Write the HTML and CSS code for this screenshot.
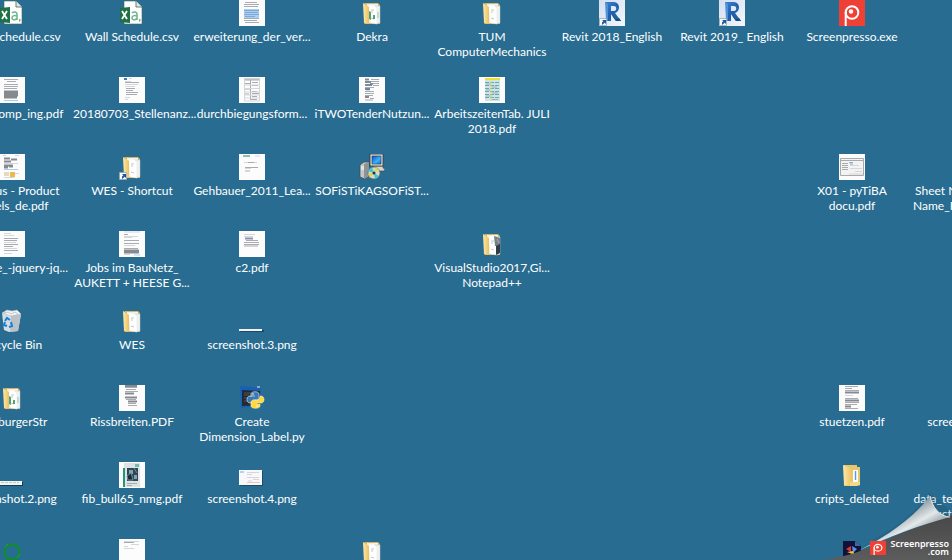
FILE: index.html
```html
<!DOCTYPE html>
<html lang="de">
<head>
<meta charset="utf-8">
<title>Desktop</title>
<link rel="stylesheet" href="styles.css">
</head>
<body>
<svg class="defs" aria-hidden="true">
  <defs>
    <linearGradient id="gFold" x1="0" y1="0" x2="1" y2="0"><stop offset="0" stop-color="#ffe9a6"/><stop offset="1" stop-color="#e9c163"/></linearGradient>
    <linearGradient id="gRevit" x1="0" y1="0" x2="1" y2="1"><stop offset="0" stop-color="#d3def0"/><stop offset="1" stop-color="#f3f7fc"/></linearGradient>
    <linearGradient id="gR" x1="0" y1="0" x2="1" y2="1"><stop offset="0" stop-color="#3c86d6"/><stop offset=".5" stop-color="#1f5fb0"/><stop offset="1" stop-color="#1a6f9a"/></linearGradient>
    <linearGradient id="gCurl" gradientUnits="userSpaceOnUse" x1="88" y1="18" x2="104" y2="46"><stop offset=".1" stop-color="#7d8f98"/><stop offset=".4" stop-color="#b8c1c5"/><stop offset=".65" stop-color="#e4e8ea"/><stop offset="1" stop-color="#98a3a8"/></linearGradient>
    <linearGradient id="gDark" x1="0" y1="0" x2="0" y2="1"><stop offset="0" stop-color="#484848"/><stop offset="1" stop-color="#5c5c5c"/></linearGradient>
    <linearGradient id="gScreen" x1="0" y1="0" x2="1" y2="1"><stop offset="0" stop-color="#1747c9"/><stop offset=".6" stop-color="#39b6f3"/><stop offset="1" stop-color="#1c5fd6"/></linearGradient>
  </defs>
  <symbol id="csv" viewBox="0 0 26 26">
    <path d="M5 1h12l6 6v17H5z" fill="#fff" stroke="#3f6b5a" stroke-opacity=".6"/>
    <path d="M17 1v6h6" fill="#dfe9e4" stroke="#49665b" stroke-width=".8"/>
    <path d="M13 13c2-2 5-1 5 1v6M18 16c-3-1-5 0-5 2s3 3 5 0" fill="none" stroke="#6cb58d" stroke-width="1.5"/>
    <path d="M20 19h1.500v2l-1.500 1z" fill="#6cb58d"/>
    <path d="M1 8l10-1v16L1 22z" fill="#1d7145"/>
    <path d="M3 11l5 8M8 11l-5 8" stroke="#fff" stroke-width="1.800"/>
  </symbol>
  <symbol id="folder" viewBox="0 0 26 26">
    <path d="M5 4l1-1h13l2 2v19H6l-1-1z" fill="#d9b55d"/>
    <path d="M8 4h11v19H8z" fill="#f4f4f2"/>
    <path d="M16 6h5v17l-4 1z" fill="#f1f3f3" stroke="#b9c0c0" stroke-width=".5"/>
    <path d="M9 5h6l3 3v16l-7-1z" fill="#fff" stroke="#d5d8d6" stroke-width=".4"/>
    <path d="M4 3l6 4v17l-5-1z" fill="url(#gFold)"/>
    <path d="M12 10h3M12 12h2M12 18l3 1" stroke="#abb" stroke-width=".8"/>
  </symbol>
  <symbol id="folderGreen" viewBox="0 0 26 26">
    <use href="#folder"/>
    <path d="M10 11l2 1v8l-2-1zM14 15h2v4h-2z" fill="#2e8b57" opacity=".8"/><path d="M19 12v6" stroke="#9cc6ae" stroke-width="1"/>
  </symbol>
  <symbol id="shortcut" viewBox="0 0 26 26">
    <path d="M.5 18.500h7v7h-7z" fill="#f7f9fb" stroke="#9aa7b5" stroke-width=".8"/>
    <path d="M3 20h4v4l-1.300-1.200L3 25v-2.500l1.300-1.200z" fill="#1c57a5"/>
  </symbol>
  <symbol id="revit" viewBox="0 0 26 26">
    <path d="M0 0h26v26H0z" fill="url(#gRevit)"/>
    <path fill-rule="evenodd" d="M6 2h9c6 0 7 9 1 11l6 8h-5l-5-7v7H7V5zM12 6v5h3c3 0 3-5 0-5z" fill="url(#gR)"/>
    <path d="M6 2l3 2v17l-2-1z" fill="#4f92d6"/><path d="M12 14l5 7h5l-2-3-3 1z" fill="#174c84"/>
    <use href="#shortcut" width="26" height="26"/>
  </symbol>
  <symbol id="presso" viewBox="0 0 26 26">
    <path d="M0 0h26v26H0z" fill="#ee4035"/>
    <circle cx="13" cy="12.500" r="6.300" fill="none" stroke="#fff" stroke-width="2"/>
    <path d="M6.700 12v14" stroke="#fff" stroke-width="2"/><circle cx="12" cy="11.500" r="2.200" fill="#fff"/>
  </symbol>
</svg>

<main class="desktop">
  <!-- column 1 -->
  <a class="item c1 r1" href="#"><svg class="icon" viewBox="0 0 26 26"><use href="#csv"/></svg><span>Door Schedule.csv</span></a>
  <a class="item c1 r2" href="#"><svg class="icon paper" viewBox="0 0 26 26"><path class="mid" d="M5 2.500h14M8 4.500h9M5 7.500h14M5 9.500h14M5 11.500h13"/><path class="bold" d="M5 14.500h14M5 16.500h14M5 18.500h14M5 20.500h13"/><path class="blue" d="M5 23.500h14"/></svg><span>bvb2_komp_ing.pdf</span></a>
  <a class="item c1 r3" href="#"><svg class="icon paper" viewBox="0 0 26 26"><path class="light" d="M4 1.500h3M5 9.500h14M16 1.500h4"/><path class="bold" d="M5 4.500h6M12 5.500h6M5 7.500h7M5 11.500h9M5 13.500h4M10 12.500h4"/><path class="blue" d="M5 15.500h14"/><path d="M5 18h5v4H5z" fill="#e8d9b9"/><path d="M11 18h5v5h-5z" fill="#efb84d"/><path class="light" d="M16 19.500h4M5 23.500h10"/></svg><span>Asterius - Product Panels_de.pdf</span></a>
  <a class="item c1 r4" href="#"><svg class="icon paper" viewBox="0 0 26 26"><path class="light" d="M5 2.500h7M5 4.500h10M5 11.500h12M5 17.500h13M5 22.500h8"/><path class="mid" d="M5 7.500h14M5 9.500h13M5 13.500h14M5 15.500h9M5 19.500h14"/></svg><span>beispiele_-jquery-jq...</span></a>
  <a class="item c1 r5" href="#"><svg class="icon" viewBox="0 0 26 26"><path d="M3 5l19 1-3 17-9 1-5-2z" fill="#d8dde1"/><path d="M12 7l10-1-3 17-8 1z" fill="#bac2c8"/><path d="M3 5l5-3 5 1 5-1 4 4-10 2z" fill="#f5f7f8" stroke="#a7b4bb" stroke-width=".6"/><path d="M5 5l4-1 3 2 4-2 3 2" fill="none" stroke="#aab8bf" stroke-width=".8"/><path d="M6 13l2-3 3 2M12 14l1 4-3 1M8 18l-3-1 1-3" fill="none" stroke="#1481d7" stroke-width="2"/></svg><span>Recycle Bin</span></a>
  <a class="item c1 r6" href="#"><svg class="icon" viewBox="0 0 26 26"><use href="#folderGreen"/></svg><span>IsenburgerStr</span></a>
  <a class="item c1 r7" href="#"><svg class="icon" viewBox="0 0 26 26"><path d="M0 20h24v4H0z" fill="#173f58"/><path d="M0 19h23v4H0z" fill="#f2f4ef"/><path d="M2 20.500h18" stroke="#c0ccbd" stroke-dasharray="3 1"/></svg><span>screenshot.2.png</span></a>
  <a class="item c1 r8" href="#" aria-label="Ring"><svg class="icon" viewBox="0 0 26 26"><circle cx="13" cy="13" r="7.500" fill="none" stroke="#128a35" stroke-width="2.500"/><path d="M6 8l3-3M18 19l3-4" stroke="#19a047" stroke-width="1"/></svg></a>

  <!-- column 2 -->
  <a class="item c2 r1" href="#"><svg class="icon" viewBox="0 0 26 26"><use href="#csv"/></svg><span>Wall Schedule.csv</span></a>
  <a class="item c2 r2" href="#"><svg class="icon paper" viewBox="0 0 26 26"><path d="M5 1h3v2H5z" fill="#3a7cc0"/><path class="light" d="M10 1.500h3M6 4.500h6M6 7.500h13M6 9.500h10M6 20.500h5M6 22.500h3"/><path class="mid" d="M6 5.500h14M7 11.500h9M7 13.500h7M7 15.500h12M7 17.500h11"/></svg><span>20180703_Stellenanz...</span></a>
  <a class="item c2 r3" href="#"><svg class="icon" viewBox="0 0 26 26"><use href="#folder"/><use href="#shortcut"/></svg><span>WES - Shortcut</span></a>
  <a class="item c2 r4" href="#"><svg class="icon paper" viewBox="0 0 26 26"><path class="light" d="M5 1h16M5 5.500h14M5 6.500h8M5 14.500h11M5 23.500h6"/><path class="mid" d="M5 3.500h4M5 9.500h15M5 12.500h15M5 17.500h14"/><path class="bold" d="M5 19.500h15M5 21.500h15"/><path class="blue" d="M15 24h6"/></svg><span>Jobs im BauNetz_ AUKETT + HEESE G...</span></a>
  <a class="item c2 r5" href="#"><svg class="icon" viewBox="0 0 26 26"><use href="#folder"/></svg><span>WES</span></a>
  <a class="item c2 r6" href="#"><svg class="icon paper" viewBox="0 0 26 26"><path class="mid" d="M6 2.500h12M7 4.500h10M6 6.500h13M7 14.500h10M9 18.500h8M9 20.500h9"/><path class="bold" d="M6 1h12M6 8.500h9M6 12.500h12M9 16.500h9"/></svg><span>Rissbreiten.PDF</span></a>
  <a class="item c2 r7" href="#"><svg class="icon paper" viewBox="0 0 26 26"><path d="M5 1h16v24H5z" fill="#dce4e3"/><path d="M4 6h2v19H4z" fill="#24947d"/><path d="M8 6h11v13H8z" fill="#314653"/><path d="M10 8h4v4h-4zM15 13h3v4h-3z" fill="#7aa5b8"/><path d="M8 14l4-3 2 7H9zM15 6l3 5" fill="#182932" stroke="#6f8c95"/><path d="M16 2h4v3h-4z" fill="#77bbb0"/><path class="mid" d="M8 21.500h10M8 23.500h5"/></svg><span>fib_bull65_nmg.pdf</span></a>
  <a class="item c2 r8" href="#" aria-label="PDF"><svg class="icon paper" viewBox="0 0 26 26"><path class="mid" d="M5 3.500h10"/><path class="light" d="M5 2.500h15M5 7.500h4M5 9.500h10M12 5.500h8"/></svg></a>

  <!-- column 3 -->
  <a class="item c3 r1" href="#"><svg class="icon paper" viewBox="0 0 26 26"><path d="M5 9h15v9H5z" fill="#a9cff2"/><path class="mid" d="M6 2.500h12M5 4.500h15M5 6.500h14M5 18.500h15M5 20.500h13M6 22.500h14"/><path d="M5 10.500h15M6 12.500h13M5 14.500h15M6 16.500h10" stroke="#7fa9d4"/></svg><span>erweiterung_der_ver...</span></a>
  <a class="item c3 r2" href="#"><svg class="icon paper" viewBox="0 0 26 26"><path class="mid" d="M6 2h14M6 3h14M6 6.500h5M6 12h6"/><path class="mid" d="M13 5.500h6M13 8.500h6M13 14.500h5M13 16.500h7M13 19.500h5M12 22.500h6M11.500 3v20M6 17h4"/><path class="light" d="M5.500 1v23h15V1M6 8h14M6 11.500h14M6 15h14M6 18h14M6 21h14"/></svg><span>durchbiegungsform...</span></a>
  <a class="item c3 r3" href="#"><svg class="icon paper" viewBox="0 0 26 26"><path d="M4 1h7v2H4z" fill="#88c6a8"/><path class="light" d="M16 2h5M6 16.500h5M5 8.500h13M6 14.500h6M6 17.500h5"/><path class="mid" d="M6 13.500h13M9 8.500h6"/></svg><span>Gehbauer_2011_Lea...</span></a>
  <a class="item c3 r4" href="#"><svg class="icon paper" viewBox="0 0 26 26"><path class="light" d="M5 3.500h11M5 5.500h9"/><path d="M6 7.500h8" stroke="#8995ae" stroke-width="2"/><path class="mid" d="M7 9.500h12M5 11.500h15M5 13.500h15M5 15h14"/></svg><span>c2.pdf</span></a>
  <a class="item c3 r5" href="#"><svg class="icon" viewBox="0 0 26 26"><path d="M1 22h24v2H1z" fill="#174a68"/><path d="M0 21h23v2H0z" fill="#f3f3f3"/></svg><span>screenshot.3.png</span></a>
  <a class="item c3 r6" href="#"><svg class="icon" viewBox="0 0 26 26"><path d="M1 1l21 2v18L2 23z" fill="#1760b8"/><path d="M3 5l18 1v14L3 21z" fill="#232a31"/><path d="M5 8h7M5 10h5M5 13h8M5 16h4" stroke="#4c5553"/><path d="M18 2h3" stroke="#eee"/><path d="M12 12V9c0-3 8-3 8 0v4c0 2-2 2-4 2-3 0-3 1-3 3h-2c-4 0-4-7 0-7h5" fill="#3679b5" stroke="#d8e4e8" stroke-width=".7"/><path d="M21 11h1c4 0 4 7 0 7h-4v1h3v2c0 3-9 3-9 0v-3c0-3 2-3 5-3 3 0 4-1 4-4z" fill="#ffd83e" stroke="#fff3bd" stroke-width=".6"/><circle cx="14" cy="9" r=".8" fill="#fff"/><circle cx="18" cy="21" r=".8" fill="#fff"/></svg><span>Create Dimension_Label.py</span></a>
  <a class="item c3 r7" href="#"><svg class="icon" viewBox="0 0 26 26"><path d="M1 9h23v15H1z" fill="#1c4d68"/><path d="M0 8h23v15H0z" fill="#f8f8fa"/><path d="M1 9h4v2H1z" fill="#b7d3ec"/><path class="light" d="M8 10.500h12M8 12.500h5M8 15.500h12M14 17.500h6M9 19h4"/><path d="M8 20.500h13" stroke="#f1c3c3"/></svg><span>screenshot.4.png</span></a>

  <!-- column 4 -->
  <a class="item c4 r1" href="#"><svg class="icon" viewBox="0 0 26 26"><use href="#folderGreen"/></svg><span>Dekra</span></a>
  <a class="item c4 r2" href="#"><svg class="icon paper" viewBox="0 0 26 26"><path class="bold" d="M6 2.500h4M6 5h6M6 8h7M6 12h5M6 20h4"/><path class="mid" d="M12 2.500h8M12 4.500h8M13 6.500h7M14 8.500h6M6 10.500h9M6 14.500h9M6 16.500h9M6 18.500h8M11 21.500h4M6 23h8"/><path d="M11 7h3M7 12.500h4" stroke="#557fbd" stroke-width="1.500"/></svg><span>iTWOTenderNutzun...</span></a>
  <a class="item c4 r3" href="#"><svg class="icon" viewBox="0 0 26 26"><path d="M1 11l4-3h5v14l-4 3-5-2z" fill="#c5c8c8" stroke="#3b484e" stroke-width=".7"/><path d="M5 10l5-2v14l-5 3z" fill="#8c9496"/><path d="M2 13h3M2 15h3" stroke="#fff"/><path d="M15 12h9v2l2 1-1 2H12z" fill="#d7d6ca" stroke="#454942" stroke-width=".6"/><path d="M11 0h13v12H11z" fill="#dedbc9" stroke="#303a42" stroke-width=".8"/><path d="M13 2h9v8h-9z" fill="url(#gScreen)" stroke="#173a75" stroke-width=".6"/><circle cx="15" cy="19" r="6" fill="#d6d9d2" stroke="#626963" stroke-width=".7"/><path d="M15 19L9 17l4-4zM15 19l5 3-4 3z" fill="#3fc6d3"/><path d="M15 19l5-3-3-3zM15 19l-4 5-2-4z" fill="#e2d44a"/><circle cx="15" cy="19" r="1.500" fill="#27353a"/></svg><span>SOFiSTiKAGSOFiST...</span></a>
  <a class="item c4 r8" href="#" aria-label="Folder"><svg class="icon" viewBox="0 0 26 26"><use href="#folder"/></svg></a>

  <!-- column 5 -->
  <a class="item c5 r1" href="#"><svg class="icon" viewBox="0 0 26 26"><use href="#folder"/></svg><span>TUM ComputerMechanics</span></a>
  <a class="item c5 r2" href="#"><svg class="icon paper" viewBox="0 0 26 26"><path d="M6 3h15v21H6z" fill="#cce4e7"/><path d="M6 1h15v2H6z" fill="#f0df31"/><path d="M6 5.500h14M6 8.500h14M6 11.500h14M6 14.500h14M6 17.500h14M6 20.500h14" stroke="#69a8b5" stroke-dasharray="4 1"/><path class="mid" d="M7 7h4M13 10h5M7 13h4M13 16h6M7 19h5M13 22.500h6"/><path d="M12 4v20" stroke="#d4dc78"/></svg><span>ArbeitszeitenTab. JULI 2018.pdf</span></a>
  <a class="item c5 r4" href="#"><svg class="icon" viewBox="0 0 26 26"><use href="#folder"/><path d="M15 5l6 2v8h-5z" fill="#73828d"/><path d="M17 15l4-2v9l-4 2z" fill="#343b42"/><path d="M18 8l2 4" stroke="#c8a78f"/></svg><span>VisualStudio2017,Gi... Notepad++</span></a>

  <!-- columns 6 and 7 -->
  <a class="item c6 r1" href="#"><svg class="icon" viewBox="0 0 26 26"><use href="#revit"/></svg><span>Revit 2018_English</span></a>
  <a class="item c7 r1" href="#"><svg class="icon" viewBox="0 0 26 26"><use href="#revit"/></svg><span>Revit 2019_ English</span></a>

  <!-- column 8 -->
  <a class="item c8 r1" href="#"><svg class="icon" viewBox="0 0 26 26"><use href="#presso"/></svg><span>Screenpresso.exe</span></a>
  <a class="item c8 r3" href="#"><svg class="icon paper" viewBox="0 0 26 26"><path d="M1.500 4.500h23v17h-23z" fill="#f3f3f4" stroke="#aaa"/><path class="mid" d="M2 6.500h22M3 9.500h6M3 11.500h6M3 13.500h6M3 15.500h6M10 8.500h4"/><path class="light" d="M11 11.500h9M11 14.500h12M16 17.500h7M10 20h14"/><path d="M11 10h3" stroke="#63aee0"/></svg><span>X01 - pyTiBA docu.pdf</span></a>
  <a class="item c8 r6" href="#"><svg class="icon paper" viewBox="0 0 26 26"><path class="mid" d="M6 1.500h13M6 3.500h7M6 5.500h14M6 13.500h13M6 17.500h14M6 19.500h12M6 23.500h13"/><path class="bold" d="M6 7.500h14M6 15.500h14M6 21.500h6"/><path class="light" d="M6 10.500h8"/></svg><span>stuetzen.pdf</span></a>
  <a class="item c8 r7" href="#"><svg class="icon" viewBox="0 0 26 26"><path d="M5 3h13v2h3v18l-4 1H5z" fill="#e8c66d"/><path d="M14 8h5v12h-5z" fill="#fff"/><path d="M16.500 9v9" stroke="#5d9ed7" stroke-width="1.500"/><path d="M4 3l9 4v17l-8-1z" fill="url(#gFold)"/><path d="M11 20h10v3l-4 1h-6z" fill="#f3d98a"/></svg><span>cripts_deleted</span></a>
  <a class="item c8 r8" href="#" aria-label="App"><svg class="icon" viewBox="0 0 26 26"><path d="M4 2h12l6 5v17H4z" fill="#101238"/><path d="M16 2v5h6z" fill="#4166a0"/><path d="M7 10l5-3v6z" fill="#e5323b"/><path d="M13 7l5 3-4 4z" fill="#5196e8"/><path d="M8 13l6-1 2 4z" fill="#f2c232"/></svg></a>

  <!-- column 9 -->
  <a class="item c9 r3" href="#"><span class="solo">Sheet Number and its Name_Revisions_1.pdf</span></a>
  <a class="item c9 r6" href="#"><span class="solo">screenshot.1.png</span></a>
  <a class="item c9 r7" href="#"><span class="solo">data_test_for_projects structures_old2.csv</span></a>
</main>

<aside class="curl">
  <svg class="curl-art" viewBox="0 0 140 70" aria-hidden="true">
    <path d="M60 50C88 36 106 20 117 2L140 22V40z" fill="#123a50" opacity=".15"/>
    <path d="M10 70C25 68 38 65 48 61C85 45 115 33 140 25V70z" fill="url(#gDark)"/>
    <path d="M46 61C70 49 100 30 118 6C120 17 128 27 138 27C108 35 76 47 46 61z" fill="url(#gCurl)"/>
    <path d="M118 6C120 17 128 27 138 27" fill="none" stroke="#e2e7e9"/>
    <svg x="58" y="51" width="16" height="14" viewBox="0 0 26 26" preserveAspectRatio="none"><use href="#presso"/></svg>
  </svg>
  <div class="brand"><div>Screenpresso</div><div>.com</div></div>
</aside>
</body>
</html>
```

FILE: styles.css
```css
html,
body {
  height: 100%;
  margin: 0;
}

body {
  position: relative;
  overflow: hidden;
  background: #286c91;
  color: #fff;
  font-family: Lato, "Open Sans", sans-serif;
  font-size: 12px;
  line-height: 15px;
}

.defs {
  position: absolute;
  width: 0;
  height: 0;
}

.desktop {
  display: grid;
  grid-template-columns: repeat(9, 120px);
  grid-template-rows: repeat(8, 77px);
  height: 100%;
  margin-left: -48px;
  overflow: hidden;
}

.item {
  display: flex;
  flex-direction: column;
  align-items: center;
  gap: 3px;
  color: inherit;
  text-align: center;
  text-decoration: none;
}

.item span {
  max-width: 118px;
}

.item .solo {
  margin-top: 29px;
}

.icon {
  flex: none;
  width: 26px;
  height: 26px;
}

.paper {
  background: #fcfcfc;
}

.light { stroke: #d4d6d8; fill: none; }
.mid { stroke: #a8abaf; fill: none; }
.bold { stroke: #868a8f; stroke-width: 2; fill: none; }
.blue { stroke: #a9cfea; fill: none; }

.c1 { grid-column: 1; }
.c2 { grid-column: 2; }
.c3 { grid-column: 3; }
.c4 { grid-column: 4; }
.c5 { grid-column: 5; }
.c6 { grid-column: 6; }
.c7 { grid-column: 7; }
.c8 { grid-column: 8; }
.c9 { grid-column: 9; }

.r1 { grid-row: 1; }
.r2 { grid-row: 2; }
.r3 { grid-row: 3; }
.r4 { grid-row: 4; }
.r5 { grid-row: 5; }
.r6 { grid-row: 6; }
.r7 { grid-row: 7; }
.r8 { grid-row: 8; }

/* Page curl lying over the bottom right corner */
.curl {
  position: absolute;
  right: 0;
  bottom: 0;
  width: 140px;
  height: 70px;
}

.curl-art {
  display: block;
  width: 100%;
  height: 100%;
}

.brand {
  position: absolute;
  right: 3px;
  bottom: 4px;
  font-family: "Noto Sans", sans-serif;
  font-size: 9px;
  font-weight: 600;
  line-height: 8px;
  text-align: right;
}
```
